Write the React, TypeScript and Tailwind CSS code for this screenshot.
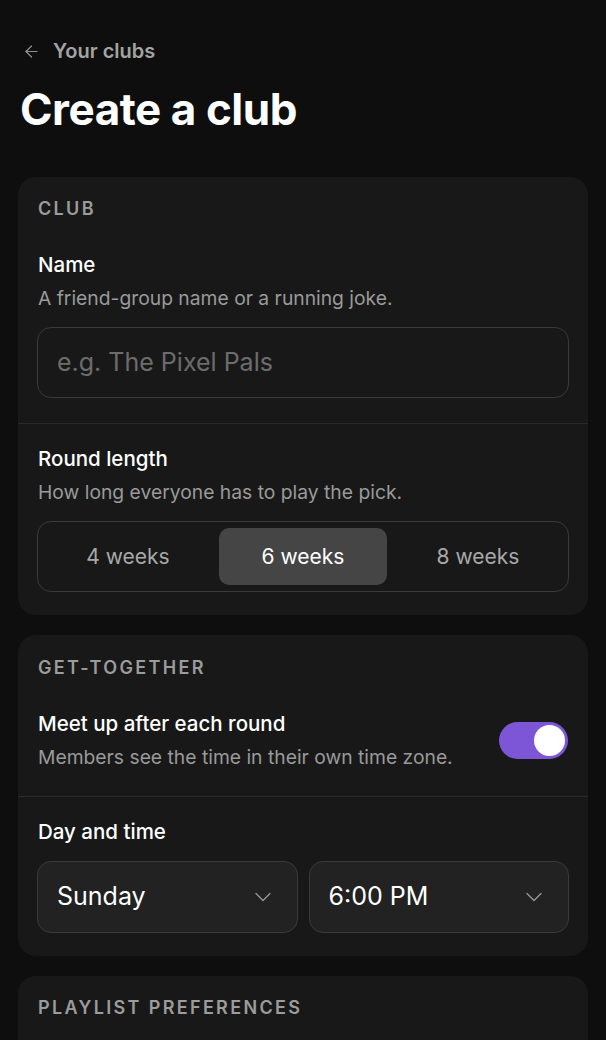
import React from 'react';
import { ArrowLeft, ChevronDown } from 'lucide-react';

const font = { fontFamily: 'Inter, "Noto Sans", sans-serif' };

const SectionLabel: React.FC<{ children: React.ReactNode }> = ({ children }) => (
  <p className="text-[18px] leading-6 font-semibold tracking-[0.13em] text-[#9c9c9c]">{children}</p>
);

const FieldTitle: React.FC<{ children: React.ReactNode }> = ({ children }) => (
  <p className="text-[20.5px] leading-7 font-medium text-white">{children}</p>
);

const FieldHint: React.FC<{ children: React.ReactNode }> = ({ children }) => (
  <p className="mt-1.5 text-[19.3px] leading-[26px] text-[#9a9a9a]">{children}</p>
);

const Select: React.FC<{ value: string }> = ({ value }) => (
  <div className="flex h-[72px] items-center justify-between rounded-[14px] border border-[#3a3a3a] bg-[#222222] pl-[19px] pr-[20px]">
    <span className="text-[25px] text-white">{value}</span>
    <ChevronDown size={28} strokeWidth={1.1} className="text-[#9a9a9a]" />
  </div>
);

export default function App() {
  const weeks = ['4 weeks', '6 weeks', '8 weeks'];
  return (
    <div className="min-h-[1040px] bg-[#0e0e0e] pb-10" style={font}>
      <div className="flex items-center gap-3 px-[22px] pt-[39px]">
        <ArrowLeft size={19} strokeWidth={1.5} className="text-[#8f8f8f]" />
        <span className="text-[20px] leading-6 font-semibold text-[#a3a3a3]">Your clubs</span>
      </div>
      <h1 className="mt-[19px] px-5 text-[44px] leading-[54px] font-bold tracking-[-0.01em] text-white">Create a club</h1>

      <div className="mx-[18px] mt-[41px] flex flex-col gap-5">
        <div className="rounded-[18px] bg-[#181818]">
          <div className="border-b border-[#2a2a2a] px-5 pt-5 pb-[25px]">
            <SectionLabel>CLUB</SectionLabel>
            <div className="mt-[30px]">
              <FieldTitle>Name</FieldTitle>
              <FieldHint>A friend-group name or a running joke.</FieldHint>
            </div>
            <div className="mt-4 -mx-px flex h-[71px] items-center rounded-[14px] border border-[#3a3a3a] px-[19px]">
              <span className="text-[25px] text-[#6c6c6c]">e.g. The Pixel Pals</span>
            </div>
          </div>
          <div className="px-5 pt-[21px] pb-[23px]">
            <FieldTitle>Round length</FieldTitle>
            <FieldHint>How long everyone has to play the pick.</FieldHint>
            <div className="mt-4 -mx-px grid h-[71px] grid-cols-3 gap-[7px] rounded-[14px] border border-[#3a3a3a] p-[6px]">
              {weeks.map((w) => (
                <div
                  key={w}
                  className={
                    w === '6 weeks'
                      ? 'flex items-center justify-center rounded-[10px] bg-[#454545] text-[21px] text-white'
                      : 'flex items-center justify-center text-[21px] text-[#a8a8a8]'
                  }
                >
                  {w}
                </div>
              ))}
            </div>
          </div>
        </div>

        <div className="rounded-[18px] bg-[#181818]">
          <div className="border-b border-[#2a2a2a] px-5 pt-[21px] pb-[26px]">
            <SectionLabel>GET-TOGETHER</SectionLabel>
            <div className="mt-[30px] flex items-center justify-between">
              <div>
                <FieldTitle>Meet up after each round</FieldTitle>
                <FieldHint>Members see the time in their own time zone.</FieldHint>
              </div>
              <div className="flex h-[37px] w-[69px] items-center justify-end rounded-full bg-[#7c56d6] pr-[3px]">
                <div className="h-[31px] w-[31px] rounded-full bg-white" />
              </div>
            </div>
          </div>
          <div className="px-5 pt-[21px] pb-[23px]">
            <FieldTitle>Day and time</FieldTitle>
            <div className="mt-[15px] -mx-px grid grid-cols-2 gap-[11px]">
              <Select value="Sunday" />
              <Select value="6:00 PM" />
            </div>
          </div>
        </div>

        <div className="rounded-[18px] bg-[#181818]">
          <div className="px-5 pt-5 pb-[120px]">
            <SectionLabel>PLAYLIST PREFERENCES</SectionLabel>
          </div>
        </div>
      </div>
    </div>
  );
}
